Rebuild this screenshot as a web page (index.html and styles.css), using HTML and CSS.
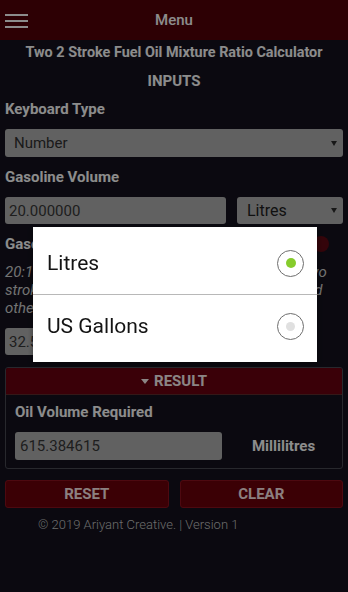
FILE: index.html
```html
<!DOCTYPE html>
<html lang="en">
<head>
<meta charset="utf-8">
<title>Two 2 Stroke Fuel Oil Mixture Ratio Calculator</title>
<link rel="stylesheet" href="styles.css">
</head>
<body>
<div class="page">
  <header class="topbar">
    <span class="menu-btn">
      <svg width="23" height="14" viewBox="0 0 23 14"><path d="M0 1H23M0 7H23M0 13H23" stroke="#f2f2f2" stroke-width="2"/></svg>
    </span>
    <div class="topbar-title">Menu</div>
    <span class="topbar-spacer"></span>
  </header>
  <main class="content">
    <h1 class="title">Two 2 Stroke Fuel Oil Mixture Ratio Calculator</h1>
    <h2 class="section-title">INPUTS</h2>

    <div class="field-label">Keyboard Type</div>
    <div class="select select-full">
      <span>Number</span>
      <svg class="caret" width="6" height="5" viewBox="0 0 6 5"><path d="M0 0H6L3 5Z" fill="#2a2a2a"/></svg>
    </div>

    <div class="field-label">Gasoline Volume</div>
    <div class="row">
      <div class="input input-main">20.000000</div>
      <div class="select select-unit">
        <span>Litres</span>
        <svg class="caret" width="6" height="5" viewBox="0 0 6 5"><path d="M0 0H6L3 5Z" fill="#2a2a2a"/></svg>
      </div>
    </div>

    <div class="label-row">
      <div class="field-label">Gasoline Oil Ratio</div>
      <span class="info-dot"></span>
    </div>
    <p class="hint">20:1 is for the older engines, 50:1 is for newer two stroke engines. Check your engine's manuals and other documentation for the correct ratio.</p>
    <div class="row ratio-row">
      <div class="input input-main">32.500000</div>
    </div>

    <section class="result">
      <div class="result-head">
        <svg width="8" height="5" viewBox="0 0 8 5"><path d="M0 0H8L4 5Z" fill="#f0e6e6"/></svg>
        <span>RESULT</span>
      </div>
      <div class="result-body">
        <div class="field-label">Oil Volume Required</div>
        <div class="row">
          <div class="input input-result">615.384615</div>
          <span class="unit-text">Millilitres</span>
        </div>
      </div>
    </section>

    <div class="buttons">
      <span class="btn">RESET</span>
      <span class="btn">CLEAR</span>
    </div>
    <footer class="footer">© 2019 Ariyant Creative. | Version 1</footer>
  </main>
</div>

<div class="backdrop"></div>
<div class="dialog">
  <div class="option">
    <span class="option-text">Litres</span>
    <span class="radio"><span class="radio-dot radio-on"></span></span>
  </div>
  <div class="divider"></div>
  <div class="option">
    <span class="option-text">US Gallons</span>
    <span class="radio"><span class="radio-dot radio-off"></span></span>
  </div>
</div>
</body>
</html>
```

FILE: styles.css
```css
* { box-sizing: border-box; }

html, body {
  margin: 0;
  padding: 0;
}

body {
  width: 348px;
  height: 592px;
  overflow: hidden;
  background: #13111c;
  font-family: Roboto, "Noto Sans", "Liberation Sans", sans-serif;
  color: #f2f2f2;
}

.page {
  min-height: 592px;
}

/* top bar */
.topbar {
  height: 40px;
  background: #4f0007;
  display: grid;
  grid-template-columns: 40px 1fr 40px;
  align-items: center;
}

.menu-btn {
  display: flex;
  padding-left: 5px;
  padding-top: 2px;
}

.topbar-title {
  text-align: center;
  font-size: 15px;
  font-weight: 500;
}

/* content */
.content {
  padding: 0 5px;
  display: flex;
  flex-direction: column;
}

.title {
  margin: 3px 0 0;
  font-size: 14.4px;
  font-weight: 700;
  line-height: 20px;
  text-align: center;
}

.section-title {
  margin: 8px 0 0;
  font-size: 15px;
  font-weight: 700;
  line-height: 20px;
  text-align: center;
}

.field-label {
  margin-top: 8px;
  font-size: 15px;
  font-weight: 700;
  line-height: 20px;
}

.select {
  background: #a8a8a8;
  border-radius: 3px;
  display: flex;
  align-items: center;
  justify-content: space-between;
  color: #2e2e2e;
  font-size: 15px;
}

.select-full {
  margin-top: 10px;
  height: 28px;
  padding: 0 6px 0 9px;
}

.select-full + .field-label {
  margin-top: 10px;
}

.row {
  display: flex;
  align-items: center;
  margin-top: 10px;
  gap: 11px;
}

.input {
  background: #a8a8a8;
  border-radius: 3px;
  color: #353535;
  font-size: 15px;
  display: flex;
  align-items: center;
  padding-left: 4px;
}

.input-main {
  width: 221px;
  height: 27px;
}

.select-unit {
  flex: 1;
  height: 27px;
  padding: 0 6px 0 10px;
  font-size: 16px;
  color: #1c1c1c;
}

.label-row {
  display: flex;
  align-items: center;
  justify-content: space-between;
  margin-top: 10px;
}

.label-row .field-label {
  margin-top: 0;
}

.info-dot {
  width: 16px;
  height: 16px;
  border-radius: 50%;
  background: #5a0812;
  margin-right: 14px;
}

.hint {
  margin: 9px 0 0;
  font-size: 15px;
  font-style: italic;
  line-height: 18px;
  color: #c6c6c6;
}

.ratio-row {
  margin-top: 11px;
}

/* result */
.result {
  margin-top: 12px;
  border: 1px solid #45454f;
  border-radius: 3px;
  overflow: hidden;
}

.result-head {
  height: 27px;
  background: #64000e;
  border-bottom: 1px solid #5a2a2a;
  display: flex;
  align-items: center;
  justify-content: center;
  gap: 5px;
  font-size: 15px;
  font-weight: 700;
  color: #f0e6e6;
}

.result-head svg {
  margin-top: 1px;
}

.result-body {
  padding: 0 9px 8px;
}

.result-body .field-label {
  margin-top: 7px;
}

.input-result {
  width: 207px;
  height: 28px;
  padding-left: 5px;
}

.result-body .row {
  gap: 0;
}

.unit-text {
  flex: 1;
  text-align: center;
  padding-left: 12px;
  font-size: 15px;
  font-weight: 700;
}

/* buttons */
.buttons {
  margin-top: 11px;
  display: grid;
  grid-template-columns: 1fr 1fr;
  gap: 11px;
}

.btn {
  height: 28px;
  background: #67000a;
  border: 1px solid #86111c;
  border-radius: 3px;
  display: flex;
  align-items: center;
  justify-content: center;
  font-size: 15px;
  font-weight: 700;
  color: #f0dcdc;
}

.footer {
  margin-top: 9px;
  padding-left: 33px;
  font-size: 13px;
  font-weight: 300;
  line-height: 16px;
  color: #bababa;
}

/* modal */
.backdrop {
  position: fixed;
  inset: 0;
  background: rgba(0, 0, 0, 0.42);
}

.dialog {
  position: fixed;
  left: 33px;
  top: 227px;
  width: 284px;
  background: #ffffff;
  padding: 5px 0;
  box-shadow: 0 2px 6px rgba(0, 0, 0, 0.4);
}

.option {
  height: 62px;
  display: flex;
  align-items: center;
  justify-content: space-between;
  padding: 0 13px 0 14px;
}

.option-text {
  font-size: 21px;
  color: #141414;
}

.divider {
  height: 1px;
  background: #b8b8b8;
}

.radio {
  width: 27px;
  height: 27px;
  border-radius: 50%;
  border: 1.5px solid #6e6e6e;
  display: flex;
  align-items: center;
  justify-content: center;
}

.radio-dot {
  border-radius: 50%;
}

.radio-on {
  width: 10px;
  height: 10px;
  background: #86cc2c;
}

.radio-off {
  width: 9px;
  height: 9px;
  background: #e0e0e0;
}
```
